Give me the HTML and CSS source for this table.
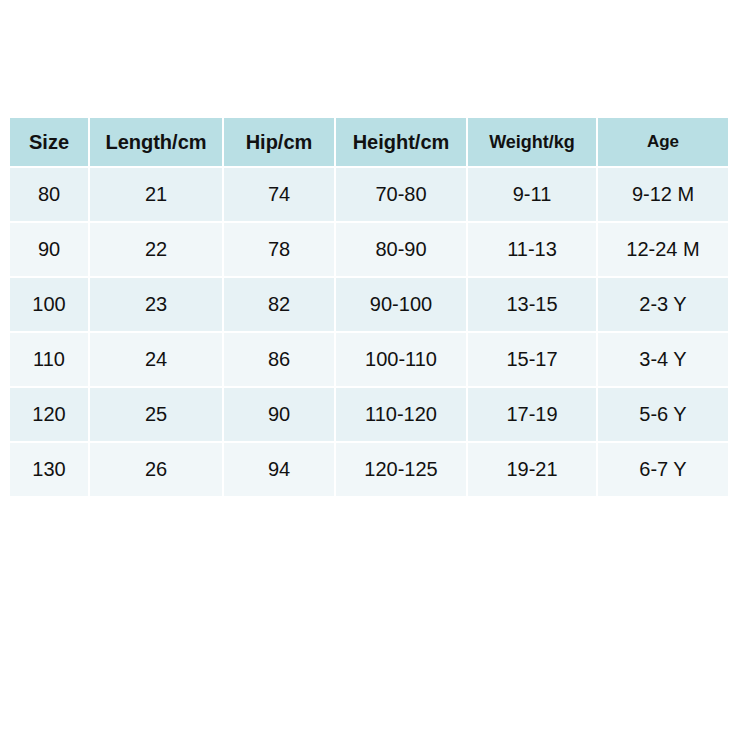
FILE: index.html
```html
<!DOCTYPE html>
<html>
<head>
<meta charset="utf-8">
<link rel="stylesheet" href="styles.css">
</head>
<body>
<div class="page">
  <div class="chart">
    <div class="cell head">Size</div>
    <div class="cell head">Length/cm</div>
    <div class="cell head">Hip/cm</div>
    <div class="cell head">Height/cm</div>
    <div class="cell head mid">Weight/kg</div>
    <div class="cell head small">Age</div>

    <div class="cell odd">80</div><div class="cell odd">21</div><div class="cell odd">74</div><div class="cell odd">70-80</div><div class="cell odd">9-11</div><div class="cell odd">9-12 M</div>
    <div class="cell even">90</div><div class="cell even">22</div><div class="cell even">78</div><div class="cell even">80-90</div><div class="cell even">11-13</div><div class="cell even">12-24 M</div>
    <div class="cell odd">100</div><div class="cell odd">23</div><div class="cell odd">82</div><div class="cell odd">90-100</div><div class="cell odd">13-15</div><div class="cell odd">2-3 Y</div>
    <div class="cell even">110</div><div class="cell even">24</div><div class="cell even">86</div><div class="cell even">100-110</div><div class="cell even">15-17</div><div class="cell even">3-4 Y</div>
    <div class="cell odd">120</div><div class="cell odd">25</div><div class="cell odd">90</div><div class="cell odd">110-120</div><div class="cell odd">17-19</div><div class="cell odd">5-6 Y</div>
    <div class="cell even">130</div><div class="cell even">26</div><div class="cell even">94</div><div class="cell even">120-125</div><div class="cell even">19-21</div><div class="cell even">6-7 Y</div>
  </div>
</div>
</body>
</html>
```
FILE: styles.css
```css
html, body {
  margin: 0;
  padding: 0;
  background: #ffffff;
}
.page {
  padding: 118px 0 0 10px;
}
.chart {
  display: grid;
  width: 718px;
  grid-template-columns: 78px 132px 110px 130px 128px 130px;
  grid-template-rows: 48px repeat(6, 53px);
  gap: 2px;
  background: #ffffff;
  font-family: "Liberation Sans", Arial, sans-serif;
  color: #111111;
}
.cell {
  display: flex;
  align-items: center;
  justify-content: center;
  font-size: 20px;
}
.head {
  background: #b9dfe4;
  font-weight: bold;
}
.head.mid {
  font-size: 18px;
}
.head.small {
  font-size: 17px;
}
.odd {
  background: #e7f2f5;
}
.even {
  background: #f1f7f9;
}
```
